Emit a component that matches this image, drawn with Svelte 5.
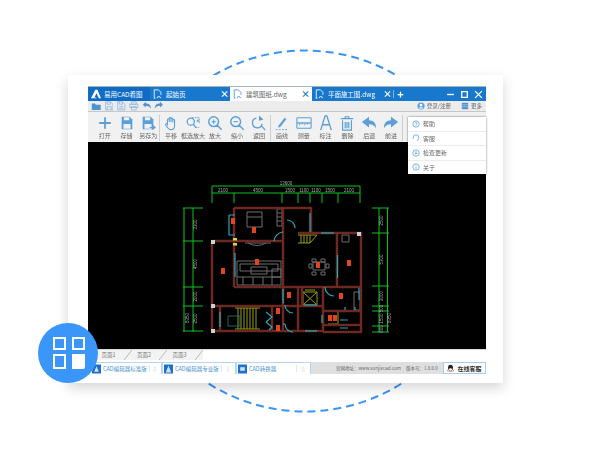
<script>
  const quick = [
    { d: 'M1 3h4l1 1.500h6V11H1z', f: 1 },
    { d: 'M2 1h6l3 3v7H2zM4 1v3h4V1M4 11V7h5v4' },
    { d: 'M2 1h6l3 3v7H2zM4 1v3h4V1M4 7h5M4 9h5' },
    { d: 'M3 1h6v3H3zM1 4h10v4H1zM3 7h6v4H3z' },
    { d: 'M1 4.500 4.500 1v2C9 3 11 5 11 9.500 9.500 7 8 6 4.500 6v2z', f: 1 },
    { d: 'M11 4.500 7.500 1v2C3 3 1 5 1 9.500 2.500 7 4 6 7.500 6v2z', f: 1 }
  ];
  const floppy = [
    { d: 'M3 2h9l3 3v11H3z', f: 1 },
    { d: 'M5.500 2.500h6V6h-6zM5 10h8v5.500H5z', w: 1 }
  ];
  const groups = [
    { w: 66, items: [
      { t: '打开', p: [{ d: 'M9 2.500v13M2.500 9h13', s: 2 }] },
      { t: '存储', p: floppy },
      { t: '另存为', p: [...floppy, { d: 'M11 14h6M14 11.500l3 2.500-3 2.500', s: 1.200 }] }
    ] },
    { w: 111, items: [
      { t: '平移', p: [{ d: 'M5 9V5.500a1 1 0 0 1 2 0V8V3.800a1 1 0 0 1 2 0V8V4.500a1 1 0 0 1 2 0V8.500V6a1 1 0 0 1 2 0v6c0 3-2 4.500-4 4.500-3 0-4-2-6-5.500-.5-1 1-1.800 2-.5z', s: 1.200 }] },
      { t: '框选放大', p: [{ d: 'M8 3h8v7M12 14h4', s: 1, da: '2 1' }, { d: 'M10.500 7.500a4 4 0 1 1-8 0 4 4 0 0 1 8 0zM9.500 10.500l3 4', s: 1.400 }, { d: 'M14.500 5v3M13 6.500h3', s: 1 }] },
      { t: '放大', p: [{ d: 'M13 7.500a5.500 5.500 0 1 1-11 0 5.500 5.500 0 0 1 11 0zM11.500 11.500l5 5', s: 1.600 }, { d: 'M7.500 5v5M5 7.500h5', s: 1.200 }] },
      { t: '缩小', p: [{ d: 'M13 7.500a5.500 5.500 0 1 1-11 0 5.500 5.500 0 0 1 11 0zM11.500 11.500l5 5', s: 1.600 }, { d: 'M5 7.500h5', s: 1.200 }] },
      { t: '返回', p: [{ d: 'M6 3.500a5.500 5.500 0 1 0 6.500 6.500M11.500 12l4.500 5', s: 1.500 }, { d: 'M9 0.500 14 5 9 6.500z', f: 1 }] }
    ] },
    { w: 132, items: [
      { t: '画线', p: [{ d: 'M5 12 12 3l2 1.500L7 13.500 4.500 14z', f: 1 }, { d: 'M2 16.500h14', s: 1, da: '2 1.500' }] },
      { t: '测量', p: [{ d: 'M1 3h16M1 15h16M1 3v12M17 3v12', s: 1.200 }, { d: 'M1 9h16', s: 1.500 }, { d: 'M4 9v3M7 9v2M10 9v3M13 9v2', s: .8 }] },
      { t: '标注', p: [{ d: 'M3 17 8 1h2l5 16M5 11h8', s: 1.500 }] },
      { t: '删除', p: [{ d: 'M2 4h14M7 4V2h4v2M4 6v11h10V6M7 8v7M9 8v7M11 8v7', s: 1.300 }] },
      { t: '后退', p: [{ d: 'M1 8 9 2v4c5 0 8 3 8 9-2-3-4-4.500-8-4.500V14z', f: 1 }] },
      { t: '前进', p: [{ d: 'M17 8 9 2v4c-5 0-8 3-8 9 2-3 4-4.500 8-4.500V14z', f: 1 }] }
    ] }
  ];
  const menu = ['帮助', '客服', '检查更新', '关于'];
  const pages = ['页面1', '页面2', '页面3'];
  const walls = [
    'M234 208H311V232', 'M298 233H361V332', 'M234 208V287', 'M212 241H283', 'M212 241V331', 'M234 287H362',
    'M212 306H298', 'M212 331H298', 'M283 208V331', 'M298 287V332', 'M337 233V287', 'M323 287V332', 'M323 311H362',
    'M323 325H362', 'M323 332H362', 'M298 306H323', 'M220 306V331', 'M272 306V331', 'M302 287V306', 'M298 331H323'
  ];
  const cyan = [
    'M229 215H235M229 215V235H235', 'M235 253V277', 'M310 213V232', 'M321 233H334', 'M337.500 255V278', 'M220 312V327',
    'M283 289V303', 'M283 324H285', 'M304 305H317', 'M322 315V323', 'M305 331H317', 'M359 288V300', 'M295 228a8 8 0 0 0-8-8',
    'M283 232a10 10 0 0 0-9 9', 'M325 287a9 9 0 0 0 9 9', 'M285 305a8 8 0 0 0 8 8', 'M285 324a8 8 0 0 0 8 8',
    'M266 312l6 5-6 5M266 322l6 5-3 3', 'M340 320h8M340 328h8', 'M345 307v3M355 307v3'
  ];
  const gray = [
    'M247 212h15v15h-15zM247 217h15', 'M237 261h44v24h-44zM240 264h38v7h-38zM237 277h44M243 277v8M253 277v8M263 277v8M272 277v8',
    'M251 267h16v7h-16z', 'M272 269h9v8h-9z', 'M277 209h5v17h-5zM277 213h5M277 217h5M277 221h5',
    'M313 262h12v8h-12zM312 259h4v3h-4zM321 259h4v3h-4zM312 272h4v3h-4zM321 272h4v3h-4zM309 264h3v4h-3zM326 264h3v4h-3z',
    'M342 235h7v7h-7z', 'M245 243h26M248 243q9 5 18 0', 'M354 292h6v18h-6z'
  ];
  const olive = [
    'M235 308H260M235 329H260M238 308V329M241 308V329M244 308V329M247 308V329M250 308V329M253 308V329M256 308V329',
    'M298 235H317M301 235V243M304 235V243M307 235V243M310 235V243M298 243H310L317 235',
    'M303 292h14v13h-14zM303 292l14 13M317 292l-14 13M305 290h10', 'M338 312V324H328'
  ];
  const teal = ['M228 316H240V326H228z'];
  const reds = [[254,230],[257,262],[223,271],[318,265],[349,263],[289,295],[341,296],[233,221],[278,311],[278,328],[330,318],[335,318]];
  const posts = [[213,242],[213,306],[213,331],[359,234]];
  const topTicks = [234, 282, 298, 310, 322, 338];
  const topLabels = [[223,'2100'],[258,'4500'],[290,'1500'],[304,'1100'],[316,'1100'],[330,'1500'],[349,'2100']];
  const leftTicks = [208, 241, 287, 306, 331];
  const rightTicks = [208, 233, 286, 306, 311, 326, 332];
  const leftLabels = [[224.500,'3300'],[264,'4500'],[296.500,'2000'],[318.500,'2500']];
  const rightLabels = [[220.500,'2500'],[259.500,'5300'],[296,'2000'],[308.500,'500'],[318.500,'1500'],[329,'600']];
</script>

<div class="stage">
  <svg class="ring" viewBox="0 0 600 450" aria-hidden="true">
    <circle cx="305" cy="231" r="180.500" />
  </svg>

  <div class="card">
    <div class="win">
      <div class="title">
        <div class="brand">
          <svg viewBox="0 0 14 12" class="logo"><path d="M6 0h3l5 12h-3L7.500 5 4.500 12l2-1.500 1.500 1.500H0z" /></svg>
          <span>易用CAD看图</span>
        </div>
        <div class="tab t1">
          <svg viewBox="0 0 12 12" class="doc"><path d="M1.500 11V1h5l3 3v3M1 11h2M9 11a2 2 0 1 0-4 0" /></svg>
          <span>起始页</span><i>×</i>
        </div>
        <div class="tab active">
          <svg viewBox="0 0 12 12" class="doc"><path d="M1.500 11V1h5l3 3v3M1 11h2M9 11a2 2 0 1 0-4 0" /></svg>
          <span>建筑图纸.dwg</span><i>×</i>
        </div>
        <div class="tab t3">
          <svg viewBox="0 0 12 12" class="doc"><path d="M1.500 11V1h5l3 3v3M1 11h2M9 11a2 2 0 1 0-4 0" /></svg>
          <span>平面施工图.dwg</span><i>×</i>
        </div>
        <div class="plus">+</div>
        <div class="controls">
          <svg viewBox="0 0 8 8"><path d="M1 4h6" /></svg>
          <svg viewBox="0 0 8 8"><path d="M1.500 1.500h5v5h-5z" /></svg>
          <svg viewBox="0 0 8 8"><path d="M1 1l6 6M7 1l-6 6" /></svg>
        </div>
      </div>

      <div class="quick">
        <div class="qicons">
          {#each quick as q}
            <svg viewBox="0 0 12 12" class="qi">
              <path d={q.d} class={q.f ? 'fill' : 'line'} />
            </svg>
          {/each}
        </div>
        <div class="account">
          <svg viewBox="0 0 10 10" class="acc"><circle cx="5" cy="5" r="4.500" /><circle cx="5" cy="3.800" r="1.700" class="w" /><path d="M2 8c.5-2 5.500-2 6 0z" class="w" /></svg>
          <span>登录/注册</span>
          <svg viewBox="0 0 10 10" class="more"><path d="M1 1h8v8H1z" /><path d="M1 3.500h8M1 6h8" class="sl" /></svg>
          <span>更多</span>
        </div>
      </div>

      <div class="ribbon">
        {#each groups as g}
          <div class="group" style="width:{g.w}px">
            {#each g.items as it}
              <div class="item">
                <svg viewBox="0 0 18 18" class="ic">
                  {#each it.p as p}
                    <path
                      d={p.d}
                      class={p.f ? 'fill' : p.w ? 'white' : 'line'}
                      stroke-width={p.s ?? 1.300}
                      stroke-dasharray={p.da}
                    />
                  {/each}
                </svg>
                <span>{it.t}</span>
              </div>
            {/each}
          </div>
        {/each}
      </div>

      <div class="canvas">
        <svg class="plan" viewBox="88 142 398 207" aria-hidden="true">
          <g class="dim">
            <path d="M212 186H360M212 193H360M212 186V203M360 186V203" />
            {#each topTicks as x}<path d="M{x} 193V203" />{/each}
            <path d="M184 208V332M193 208V332" />
            {#each leftTicks as y}<path d="M183 {y}H203" />{/each}
            <path d="M379 208V332M387.500 208V332" />
            {#each rightTicks as y}<path d="M372 {y}H389" />{/each}
          </g>
          <g class="lab">
            <text x="286" y="185">13600</text>
            {#each topLabels as l}<text x={l[0]} y="192">{l[1]}</text>{/each}
            {#each leftLabels as l}<text transform="translate(197 {l[0]}) rotate(-90)">{l[1]}</text>{/each}
            <text transform="translate(189 318) rotate(-90)">8350</text>
            {#each rightLabels as l}<text transform="translate(383 {l[0]}) rotate(-90)">{l[1]}</text>{/each}
            <text transform="translate(391 318) rotate(-90)">8350</text>
          </g>
          {#each gray as d}<path {d} class="gray" />{/each}
          {#each olive as d}<path {d} class="olive" />{/each}
          {#each teal as d}<path {d} class="teal" />{/each}
          {#each walls as d}<path {d} class="wall" /><path {d} class="wall2" />{/each}
          {#each cyan as d}<path {d} class="cyan" />{/each}
          {#each reds as r}<rect x={r[0] - 2} y={r[1] - 3} width="4" height="6" class="red" />{/each}
          {#each posts as r}<rect x={r[0] - 2} y={r[1] - 2} width="4" height="4" class="post" />{/each}
          <rect x="233" y="238" width="4" height="2.500" class="yel" />
          <rect x="233" y="243" width="4" height="2.500" class="yel" />
        </svg>
      </div>

      <div class="pages">
        {#each pages as p}
          <div class="page"><span>{p}</span><svg viewBox="0 0 8 10"><path d="M0 10 8 0" /></svg></div>
        {/each}
      </div>

      <div class="bottom">
        <div class="btab b1">
          <svg viewBox="0 0 10 10" class="app"><rect width="10" height="10" /><path d="M5 2 2.500 8h5z" class="ap" /></svg>
          <span>CAD编辑器标准版</span><em>⇩</em>
        </div>
        <div class="btab b2">
          <svg viewBox="0 0 10 10" class="app"><rect width="10" height="10" /><path d="M5 1 2 9h6z" class="ap" /></svg>
          <span>CAD编辑器专业版</span><em>⇩</em>
        </div>
        <div class="btab b3">
          <svg viewBox="0 0 10 10" class="app"><rect width="10" height="10" /><path d="M2.500 3h5v4h-5z" class="ap" /></svg>
          <span>CAD转换器</span><em>⇩</em>
        </div>
        <div class="status">
          <span class="site">官网地址：www.xunjiecad.com</span>
          <span class="ver">版本号：1.8.0.0</span>
          <div class="svc">
            <svg viewBox="0 0 10 12" class="qq">
              <ellipse cx="5" cy="5" rx="3.500" ry="4.500" />
              <ellipse cx="5" cy="7.500" rx="2.300" ry="2" class="qw" />
              <path d="M1.500 7.500 0.500 10M8.500 7.500 9.500 10M2 10h6" class="qr" />
            </svg>
            <span>在线客服</span>
          </div>
        </div>
      </div>

      <div class="menu">
        {#each menu as m, i}
          <div class="mrow">
            <svg viewBox="0 0 10 10" class="mi">
              {#if i === 1}
                <path d="M1.500 6V4.500a3.500 3.500 0 0 1 7 0V6M8.500 6.500 6 8.500" />
              {:else}
                <circle cx="5" cy="5" r="4" />
                {#if i === 0}<path d="M3.800 4a1.200 1.200 0 1 1 1.200 1.500V6.200M5 7v.5" />{/if}
                {#if i === 2}<path d="M5 2.500v4M3.500 5 5 6.500 6.500 5" />{/if}
                {#if i === 3}<path d="M5 4.500v3M5 2.700v.8" />{/if}
              {/if}
            </svg>
            <span>{m}</span>
          </div>
        {/each}
      </div>
    </div>
  </div>

  <div class="badge">
    <span class="sq"></span><span class="sq"></span><span class="sq"></span><span class="sq solid"></span>
  </div>
</div>

<style>
  :global(body) { margin: 0; background: #fff; }
  .stage {
    position: relative;
    width: 600px;
    height: 450px;
    overflow: hidden;
    padding: 75px 97px 0 68px;
    box-sizing: border-box;
    background: #fff;
    font-family: "Noto Sans CJK SC", "Liberation Sans", sans-serif;
  }
  .ring { position: absolute; inset: 0; width: 600px; height: 450px; }
  .ring circle { fill: none; stroke: #3a94f6; stroke-width: 2; stroke-dasharray: 8 5; }
  .card {
    position: relative;
    width: 435px;
    height: 308px;
    padding: 11px 17px 0 20px;
    box-sizing: border-box;
    background: #fff;
    box-shadow: 0 5px 12px rgba(0, 0, 0, .17);
  }
  .win {
    position: relative;
    width: 398px;
    filter: blur(.3px);
    display: flex;
    flex-direction: column;
  }
  .title {
    display: flex;
    align-items: stretch;
    height: 15px;
    box-sizing: border-box;
    background: #1878cd;
    border-top: 1px solid #a9b3bb;
    color: #fff;
    font-size: 6.500px;
  }
  .brand {
    width: 62px;
    display: flex;
    align-items: center;
    gap: 3px;
    padding-left: 3px;
    box-sizing: border-box;
    background: #0f6cc6;
    white-space: nowrap;
  }
  .logo { width: 10px; height: 10px; fill: #fff; flex: none; }
  .tab {
    width: 80px;
    display: flex;
    align-items: center;
    padding: 0 2px 0 3px;
    box-sizing: border-box;
    white-space: nowrap;
    gap: 3px;
  }
  .tab span { flex: 1; }
  .tab i { font-style: normal; font-size: 9px; font-weight: 700; width: 8px; line-height: 10px; text-align: center; }
  .active { width: 82px; background: #fff; color: #666; padding: 0 3px; }
  .active i { color: #1b78cf; }
  .active .doc { stroke: #4a94d8; }
  .t3 { padding: 0 1px 0 3px; }
  .doc { width: 10px; height: 10px; fill: none; stroke: #fff; stroke-width: 1; flex: none; }
  .plus {
    width: 14px;
    border-left: 1px solid #7fb5e6;
    margin: 3px 0 3px 1px;
    display: flex;
    align-items: center;
    justify-content: center;
    font-size: 11px;
    font-weight: 700;
    line-height: 9px;
    box-sizing: border-box;
  }
  .controls { margin-left: auto; display: flex; align-items: center; gap: 5px; padding-right: 3px; }
  .controls svg { width: 9px; height: 9px; fill: none; stroke: #fff; stroke-width: 1.200; }
  .quick {
    height: 11px;
    box-sizing: border-box;
    display: flex;
    justify-content: space-between;
    align-items: center;
    background: #ececec;
    border-bottom: 1px solid #c4c7ca;
    color: #666;
    font-size: 5.500px;
  }
  .qicons { display: flex; gap: 3px; padding-left: 3px; }
  .qi { width: 9.700px; height: 9.700px; }
  .qi .fill { fill: #4d93cf; }
  .qi .line { fill: none; stroke: #8ab7dc; stroke-width: 1; }
  .account { display: flex; align-items: center; gap: 2px; padding-right: 4px; white-space: nowrap; }
  .acc { width: 8px; height: 8px; fill: #5da3dc; }
  .acc .w { fill: #fff; }
  .more { width: 8px; height: 8px; margin-left: 8px; fill: #5590c8; }
  .more .sl { stroke: #dcebf7; stroke-width: .6; }
  .ribbon {
    height: 30px;
    display: flex;
    padding-left: 6px;
    background: #f1f1f1;
    box-sizing: border-box;
  }
  .group {
    display: flex;
    height: 26px;
    margin-top: 3px;
    border-right: 1px solid #cdcdcd;
    box-sizing: border-box;
  }
  .item {
    flex: 1;
    min-width: 0;
    display: flex;
    flex-direction: column;
    align-items: center;
    color: #666;
    font-size: 6px;
    line-height: 10px;
    white-space: nowrap;
  }
  .ic { width: 16px; height: 16px; flex: none; }
  .ic .fill { fill: #5a9fd8; }
  .ic .white { fill: #f1f1f1; }
  .ic .line { fill: none; stroke: #5a9fd8; }
  .canvas { height: 207px; background: #000; }
  .plan { display: block; width: 398px; height: 207px; }
  .plan path { fill: none; }
  .dim path { stroke: #0cc41c; stroke-width: 1; }
  .lab text { fill: #a8a8a8; font: 4.500px "Liberation Sans", sans-serif; text-anchor: middle; }
  .plan .gray { stroke: #6e6e6e; stroke-width: 1; }
  .plan .olive { stroke: #9c9c18; stroke-width: 1; }
  .plan .teal { stroke: #1d6a58; stroke-width: 1; }
  .plan .wall { stroke: #66251e; stroke-width: 2.500; }
  .plan .wall2 { stroke: #8a382c; stroke-width: 1; stroke-dasharray: 1 1.500; }
  .plan .cyan { stroke: #2aa5b8; stroke-width: 1.200; }
  .red { fill: #e2451d; }
  .post { fill: #cfcfcf; }
  .yel { fill: #d9d92a; }
  .pages {
    height: 13px;
    display: flex;
    padding-left: 8px;
    background: #fff;
    border-top: 1px solid #d4d4d4;
    box-sizing: border-box;
  }
  .page {
    width: 35.500px;
    height: 10px;
    display: flex;
    align-items: center;
    justify-content: flex-end;
    gap: 8px;
    background: #f3f3f3;
    color: #777;
    font-size: 5.500px;
    white-space: nowrap;
  }
  .page svg { width: 8px; height: 10px; fill: none; stroke: #aaa; stroke-width: .8; flex: none; }
  .bottom {
    height: 12px;
    display: flex;
    font-size: 5.500px;
    color: #4d93cf;
    white-space: nowrap;
  }
  .btab {
    display: flex;
    align-items: center;
    gap: 2px;
    background: #fff;
    border: 1px solid #b8d6ef;
    border-bottom: 0;
    box-sizing: border-box;
    padding-left: 1px;
  }
  .b1 { width: 74px; padding-left: 3px; }
  .b2 { width: 74px; }
  .b3 { width: 75px; }
  .btab span { flex: 1; }
  .btab em {
    font-style: normal;
    font-size: 5px;
    width: 12px;
    text-align: center;
    color: #9dc4e6;
    border-left: 1px solid #dfe9f2;
    margin-right: 1px;
  }
  .app { width: 9px; height: 10px; fill: #1e70c8; flex: none; }
  .app .ap { fill: #cfe3f6; }
  .status {
    flex: 1;
    display: flex;
    align-items: center;
    background: #dfdfdf;
    color: #666;
    font-size: 4.500px;
    padding-left: 25px;
  }
  .ver { margin-left: 5px; }
  .svc {
    margin-left: auto;
    width: 43px;
    height: 12px;
    box-sizing: border-box;
    border: 1px solid #a9cbe8;
    background: #fff;
    display: flex;
    align-items: center;
    justify-content: center;
    gap: 3px;
    color: #333;
    font-size: 6px;
    font-weight: 700;
  }
  .qq { width: 7px; height: 9px; fill: #222; }
  .qq .qw { fill: #fff; }
  .qq .qr { fill: none; stroke: #d8402a; stroke-width: 1; }
  .menu {
    position: absolute;
    right: 0;
    top: 31px;
    width: 78px;
    height: 57px;
    background: #fff;
    box-shadow: 0 0 2px rgba(0, 0, 0, .55);
    display: flex;
    flex-direction: column;
    color: #666;
    font-size: 6px;
  }
  .mrow {
    flex: 1;
    display: flex;
    align-items: center;
    gap: 3px;
    padding-left: 4px;
    border-bottom: 1px solid #ececec;
  }
  .mrow:last-child { border-bottom: 0; }
  .mi { width: 8px; height: 8px; fill: none; stroke: #5ba0d8; stroke-width: 1; flex: none; }
  .badge {
    position: absolute;
    left: 38px;
    top: 323px;
    width: 60px;
    height: 60px;
    padding-left: 2px;
    box-sizing: border-box;
    border-radius: 50%;
    background: #3a96f8;
    display: grid;
    grid-template-columns: 13px 13px;
    grid-template-rows: 13px 15px;
    gap: 4px 6px;
    align-content: center;
    justify-content: center;
  }
  .sq { border: 2.500px solid #fff; box-sizing: border-box; }
  .solid { background: #fff; border-radius: 0 0 2px 0; }
</style>
